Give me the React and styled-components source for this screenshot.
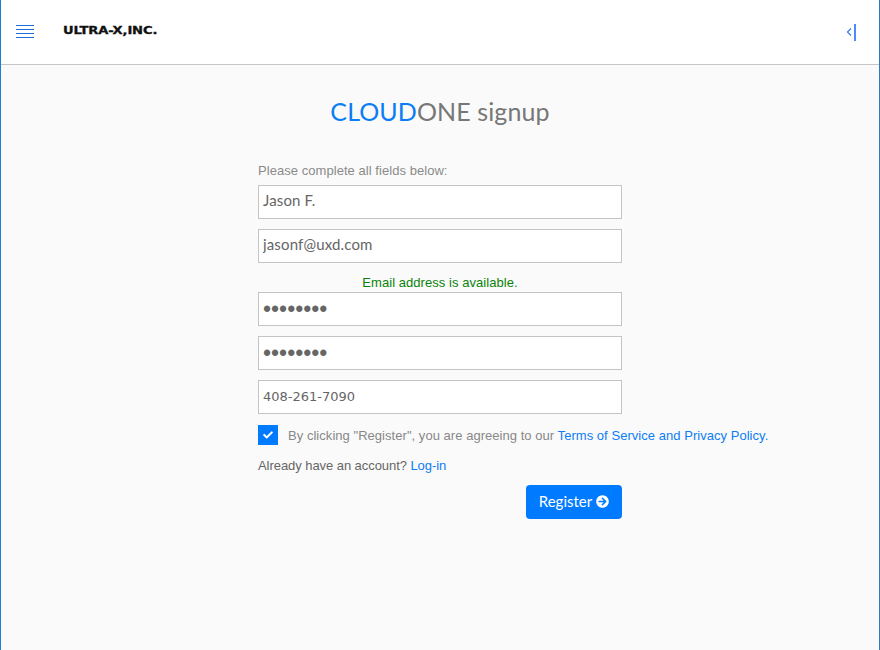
import React from 'react';
import styled, { createGlobalStyle } from 'styled-components';
import { FaArrowCircleRight, FaCheck } from 'react-icons/fa';

const GlobalStyle = createGlobalStyle`
  html, body {
    margin: 0;
    padding: 0;
    height: 100%;
  }
  body {
    font-family: "Liberation Sans", Arial, sans-serif;
  }
  #root {
    height: 100%;
  }
`;

const Page = styled.div`
  box-sizing: border-box;
  height: 650px;
  display: flex;
  flex-direction: column;
  background: #fafafa;
  border-left: 1px solid #1b7fdc;
  border-right: 1px solid #2a7cc4;
`;

const Header = styled.header`
  box-sizing: border-box;
  height: 65px;
  display: flex;
  align-items: center;
  padding: 0 23px 1px 15px;
  background: #fff;
  border-bottom: 1px solid #c6c6ca;
`;

const MenuIcon = styled.div`
  width: 18px;
  height: 13px;
  display: flex;
  flex-direction: column;
  justify-content: space-between;
  span {
    display: block;
    height: 1px;
    background: #1a6fe0;
  }
`;

const Logo = styled.div`
  margin-left: 29px;
  margin-bottom: 3px;
  font-family: "DejaVu Sans", sans-serif;
  font-weight: 700;
  font-size: 10px;
  letter-spacing: -0.1px;
  color: #111;
  white-space: nowrap;
  -webkit-text-stroke: 0.3px #111;
  transform: scaleX(1.31);
  transform-origin: left center;
`;

const Collapse = styled.svg`
  margin-left: auto;
  margin-top: 2px;
`;

const Main = styled.main`
  flex: 1;
  display: flex;
  flex-direction: column;
  align-items: center;
`;

const Title = styled.h1`
  margin: 30px 0 0;
  font-family: "Lato", sans-serif;
  font-weight: 400;
  font-size: 25px;
  line-height: 32px;
  letter-spacing: 0.1px;
  color: #777;
  span {
    color: #0d7df5;
  }
`;

const Form = styled.form`
  width: 364px;
  margin-top: 36px;
  display: flex;
  flex-direction: column;
`;

const Hint = styled.div`
  font-size: 13px;
  line-height: 16px;
  letter-spacing: 0.05px;
  color: #8a8a8a;
  margin-bottom: 6px;
`;

const Field = styled.input`
  box-sizing: border-box;
  width: 100%;
  height: 34px;
  margin-bottom: ${(p) => (p.$tight ? 0 : 10)}px;
  padding: 0 4px ${(p) => p.$lift || 0}px;
  border: 1px solid #c4c4c4;
  border-radius: 0;
  outline: none;
  background: #fff;
  color: #666;
  font-family: ${(p) => p.$font || '"Lato", sans-serif'};
  font-size: ${(p) => p.$size || 15}px;
  letter-spacing: ${(p) => (p.$font ? 0 : 0.15)}px;
`;

const Status = styled.div`
  height: 19px;
  padding-top: 10px;
  text-align: center;
  font-size: 13px;
  line-height: 19px;
  letter-spacing: 0.05px;
  color: #0a820a;
`;

const Agree = styled.div`
  display: flex;
  align-items: center;
  height: 20px;
  margin-top: 1px;
  white-space: nowrap;
  font-size: 13px;
  letter-spacing: 0.04px;
  color: #888;
`;

const Check = styled.span`
  flex: none;
  width: 20px;
  height: 20px;
  margin-right: 10px;
  display: flex;
  align-items: center;
  justify-content: center;
  background: #007bff;
  color: #fff;
  font-size: 10px;
`;

const Link = styled.a`
  color: #0d7df5;
  text-decoration: none;
`;

const Account = styled.div`
  margin-top: 13px;
  font-size: 13px;
  line-height: 16px;
  letter-spacing: -0.06px;
  color: #666;
`;

const Actions = styled.div`
  display: flex;
  justify-content: flex-end;
  margin-top: 11px;
`;

const Register = styled.button`
  box-sizing: border-box;
  width: 96px;
  height: 34px;
  padding: 0 0 2px;
  display: flex;
  align-items: center;
  justify-content: center;
  gap: 4px;
  border: none;
  border-radius: 4px;
  background: #007bff;
  color: #fff;
  font-family: "Lato", sans-serif;
  font-size: 15px;
  svg {
    font-size: 13px;
  }
`;

const passwordFont = '"Liberation Sans", sans-serif';

export default function App() {
  return (
    <>
      <GlobalStyle />
      <Page>
        <Header>
          <MenuIcon>
            <span />
            <span />
            <span />
            <span />
          </MenuIcon>
          <Logo>ULTRA-X,INC.</Logo>
          <Collapse width="10" height="17" viewBox="0 0 10 17">
            <path d="M5 4.500 L1.500 8 L5 11.500" fill="none" stroke="#2f7df0" strokeWidth="1.200" />
            <rect x="8" y="0" width="2" height="17" fill="#4a8cff" />
          </Collapse>
        </Header>
        <Main>
          <Title>
            <span>CLOUD</span>ONE signup
          </Title>
          <Form onSubmit={(e) => e.preventDefault()}>
            <Hint>Please complete all fields below:</Hint>
            <Field type="text" defaultValue="Jason F." $lift={4} />
            <Field type="email" defaultValue="jasonf@uxd.com" $lift={4} $tight />
            <Status>Email address is available.</Status>
            <Field type="password" defaultValue="password" $font={passwordFont} $size={23} />
            <Field type="password" defaultValue="password" $font={passwordFont} $size={23} />
            <Field type="tel" defaultValue="408-261-7090" $font='"DejaVu Sans", sans-serif' $size={13} $lift={2} />
            <Agree>
              <Check>
                <FaCheck />
              </Check>
              <span>
                By clicking "Register", you are agreeing to our <Link href="#">Terms of Service and Privacy Policy.</Link>
              </span>
            </Agree>
            <Account>
              Already have an account? <Link href="#">Log-in</Link>
            </Account>
            <Actions>
              <Register type="submit">
                Register <FaArrowCircleRight />
              </Register>
            </Actions>
          </Form>
        </Main>
      </Page>
    </>
  );
}
